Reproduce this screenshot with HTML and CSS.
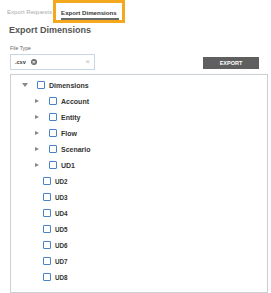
FILE: index.html
```html
<!DOCTYPE html>
<html lang="en">
<head>
    <meta charset="UTF-8">
    <meta name="viewport" content="width=device-width, initial-scale=1.0">
    <title>Export Dimensions</title>
    <link rel="stylesheet" href="styles.css">
</head>
<body>
    <div class="tabs">
        <span class="tab">Export Requests</span>
        <span class="tab active"><span class="tab-label">Export Dimensions</span></span>
    </div>

    <h1 class="title">Export Dimensions</h1>

    <div class="form-row">
        <div class="field">
            <label class="field-label">File Type</label>
            <div class="select-box">
                <span class="chip">.csv <span class="chip-close">&times;</span></span>
                <span class="clear">&times;</span>
            </div>
        </div>
        <button type="button" class="export-btn">EXPORT</button>
    </div>

    <div class="tree-panel">
        <div class="node level-0">
            <span class="caret-slot"><span class="caret down"></span></span>
            <span class="check"></span>
            <span class="node-label">Dimensions</span>
        </div>
        <div class="node level-1">
            <span class="caret-slot"><span class="caret right"></span></span>
            <span class="check"></span>
            <span class="node-label">Account</span>
        </div>
        <div class="node level-1">
            <span class="caret-slot"><span class="caret right"></span></span>
            <span class="check"></span>
            <span class="node-label">Entity</span>
        </div>
        <div class="node level-1">
            <span class="caret-slot"><span class="caret right"></span></span>
            <span class="check"></span>
            <span class="node-label">Flow</span>
        </div>
        <div class="node level-1">
            <span class="caret-slot"><span class="caret right"></span></span>
            <span class="check"></span>
            <span class="node-label">Scenario</span>
        </div>
        <div class="node level-1">
            <span class="caret-slot"><span class="caret right"></span></span>
            <span class="check"></span>
            <span class="node-label">UD1</span>
        </div>
        <div class="node leaf">
            <span class="check"></span>
            <span class="node-label small">UD2</span>
        </div>
        <div class="node leaf">
            <span class="check"></span>
            <span class="node-label small">UD3</span>
        </div>
        <div class="node leaf">
            <span class="check"></span>
            <span class="node-label small">UD4</span>
        </div>
        <div class="node leaf">
            <span class="check"></span>
            <span class="node-label small">UD5</span>
        </div>
        <div class="node leaf">
            <span class="check"></span>
            <span class="node-label small">UD6</span>
        </div>
        <div class="node leaf">
            <span class="check"></span>
            <span class="node-label small">UD7</span>
        </div>
        <div class="node leaf">
            <span class="check"></span>
            <span class="node-label small">UD8</span>
        </div>
    </div>
</body>
</html>
```

FILE: styles.css
```css
* {
    margin: 0;
    padding: 0;
    box-sizing: border-box;
}

body {
    font-family: "Liberation Sans", Arial, sans-serif;
    background: #fff;
    color: #333;
    width: 271px;
}

.tabs {
    display: flex;
    height: 23px;
    padding-left: 7px;
}

.tab {
    display: flex;
    align-items: center;
    font-size: 6.1px;
    color: #aaa;
}

.tab.active {
    margin-left: 1px;
    padding: 0 3px 0 5px;
    border: 3px solid #f4a81d;
    color: #333;
    font-weight: bold;
}

.tab-label {
    display: block;
    padding: 6px 2px 2px 0;
    border-bottom: 2px solid #6a6a6a;
    line-height: 7px;
}

.title {
    margin: 1px 0 0 9px;
    font-size: 9px;
    line-height: 12px;
    font-weight: bold;
    color: #555;
}

.form-row {
    display: flex;
    align-items: flex-end;
    justify-content: space-between;
    margin-top: 9px;
    padding: 0 12px 0 10px;
}

.field-label {
    display: block;
    font-size: 5.2px;
    line-height: 6px;
    color: #666;
    margin-bottom: 3px;
}

.select-box {
    display: flex;
    align-items: center;
    justify-content: space-between;
    width: 85px;
    height: 16px;
    padding: 0 4px;
    border: 1px solid #c9d6e3;
}

.chip {
    display: flex;
    align-items: center;
    font-size: 5.5px;
    font-weight: bold;
    color: #333;
}

.chip-close {
    display: flex;
    align-items: center;
    justify-content: center;
    width: 6px;
    height: 6px;
    margin-left: 5px;
    border-radius: 50%;
    background: #6b6b6b;
    color: #fff;
    font-size: 6px;
    line-height: 6px;
}

.clear {
    color: #bbb;
    font-size: 8px;
    line-height: 8px;
}

.export-btn {
    width: 56px;
    height: 12px;
    margin-bottom: 1px;
    background: #5f5f5f;
    border: none;
    color: #fff;
    font-family: inherit;
    font-size: 5.5px;
    font-weight: bold;
}

.tree-panel {
    margin: 4px 3px 0 10px;
    height: 219px;
    padding-top: 2px;
    border: 1px solid #cad0d4;
}

.node {
    display: flex;
    align-items: center;
    height: 16px;
}

.level-0 {
    padding-left: 8px;
}

.level-1 {
    padding-left: 20px;
}

.leaf {
    padding-left: 32px;
}

.caret-slot {
    display: flex;
    align-items: center;
    justify-content: center;
    width: 12px;
    margin-right: 6px;
}

.caret.down {
    border-left: 3px solid transparent;
    border-right: 3px solid transparent;
    border-top: 4px solid #888;
}

.caret.right {
    border-top: 2.5px solid transparent;
    border-bottom: 2.5px solid transparent;
    border-left: 4px solid #888;
}

.check {
    width: 8px;
    height: 8px;
    border: 1px solid #4a82c8;
    border-radius: 1px;
    background: #fff;
}

.node-label {
    margin-left: 4px;
    font-size: 7px;
    font-weight: bold;
    color: #333;
}

.node-label.small {
    font-size: 6.3px;
}
```
